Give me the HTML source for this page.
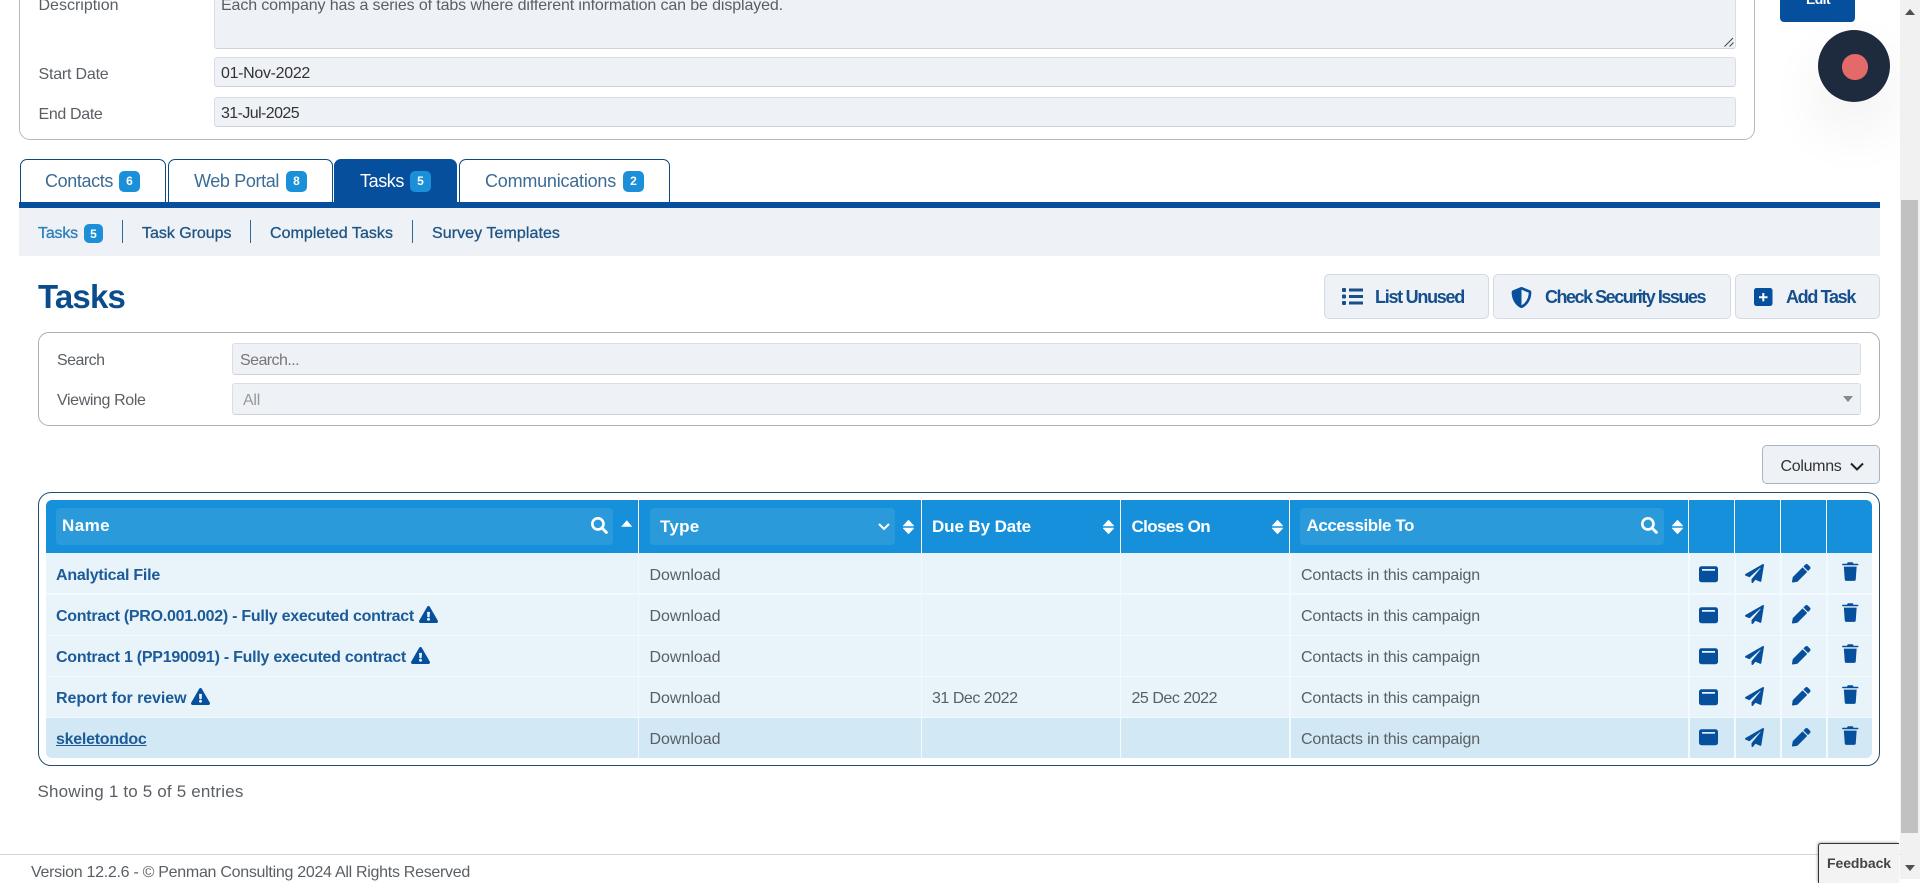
<!DOCTYPE html>
<html lang="en"><head><meta charset="utf-8"><title>Tasks</title>
<style>
html,body{margin:0;padding:0;width:1920px;height:879px;overflow:hidden;background:#fff;font-family:"Liberation Sans",Arial,sans-serif}
.b{position:absolute;box-sizing:border-box}
.t{position:absolute;white-space:nowrap;line-height:20px;height:20px;font-size:16px;color:#5a5f64;margin-top:1.500px}
.in{position:absolute;box-sizing:border-box;background:#eef1f6;border:1px solid #dadde3;border-bottom-color:#cfd3d9;border-radius:3px}
.tab{position:absolute;box-sizing:border-box;top:159px;height:43px;background:#fff;border:1px solid #0a4a80;border-bottom:0;border-radius:7px 7px 0 0}
.bd{position:absolute;background:#1b90d8;color:#fff;border-radius:5px;font-weight:bold;font-size:12px;text-align:center}
.tabt{font-size:18px;color:#3b6c96;margin-top:0}
.sub{font-size:16px;color:#1f5585;-webkit-text-stroke:.3px #1f5585;margin-top:1px}
.btn{position:absolute;box-sizing:border-box;top:274px;height:45px;background:#eef1f6;border:1px solid #d3dae2;border-radius:5px}
.bt{font-size:18px;font-weight:bold;color:#154f8c;margin-top:1px}
.h{font-size:17px;font-weight:bold;color:#fff;margin-top:0}
.n{font-size:16px;font-weight:bold;color:#1c5b98;margin-top:1px}
.row{position:absolute;left:46px;width:1826px;height:39.500px;background:#e8f3fa}
.v{position:absolute;width:1.500px;background:#f3f9fd;top:553px;height:205px}
.hv{position:absolute;width:1px;background:#fff;top:500px;height:53px}
svg.i{position:absolute;fill:#064f9c;overflow:visible}
.fb{position:absolute;box-sizing:border-box;border-radius:4px;background:#2a9adb}
</style></head><body>
<svg width="0" height="0" style="position:absolute"><defs>
<symbol id="search" viewBox="0 0 512 512"><path d="M505 442.7L405.3 343c-4.5-4.5-10.6-7-17-7H372c27.6-35.3 44-79.7 44-128C416 93.1 322.9 0 208 0S0 93.1 0 208s93.1 208 208 208c48.3 0 92.7-16.4 128-44v16.3c0 6.4 2.5 12.5 7 17l99.7 99.7c9.4 9.4 24.6 9.4 33.9 0l28.3-28.3c9.4-9.4 9.4-24.6.1-34zM208 336c-70.7 0-128-57.2-128-128 0-70.7 57.2-128 128-128 70.7 0 128 57.2 128 128 0 70.7-57.2 128-128 128z"/></symbol>
<symbol id="plane" viewBox="0 0 512 512"><path d="M476 3.2L12.5 270.6c-18.1 10.4-15.8 35.6 2.2 43.2L121 358.4l287.3-253.2c5.5-4.9 13.3 2.6 8.6 8.3L176 407v80.5c0 23.6 28.5 32.9 42.5 15.8L282 426l124.6 52.2c14.2 6 30.4-2.9 33-18.2l72-432C515 7.8 493.3-6.8 476 3.2z"/></symbol>
<symbol id="pencil" viewBox="0 0 512 512"><path d="M497.9 142.1l-46.1 46.1c-4.7 4.7-12.3 4.7-17 0l-111-111c-4.7-4.7-4.7-12.3 0-17l46.1-46.1c18.7-18.7 49.1-18.7 67.9 0l60.1 60.1c18.8 18.7 18.8 49.1 0 67.9zM284.2 99.8L21.6 362.4.4 483.9c-2.9 16.4 11.4 30.6 27.8 27.8l121.5-21.3 262.6-262.6c4.7-4.7 4.7-12.3 0-17l-111-111c-4.8-4.7-12.4-4.7-17.1 0z"/></symbol>
<symbol id="trash" viewBox="0 0 16 19"><path d="M5.5 0.3h5l.8 1.4H15.4a.6.6 0 0 1 0 1.6H.6a.6.6 0 0 1 0-1.6H4.7zM1.6 4.6h12.8l-.9 12.8a1.6 1.6 0 0 1-1.6 1.5H4.1a1.6 1.6 0 0 1-1.6-1.5z"/></symbol>
<symbol id="book" viewBox="0 0 19 16"><path fill-rule="evenodd" d="M2.5 0h14A2.5 2.5 0 0 1 19 2.5v11a2.5 2.5 0 0 1-2.500 2.500h-14A2.500 2.500 0 0 1 0 13.500v-11A2.500 2.500 0 0 1 2.500 0zM3 2.800v1.700h13V2.800z"/></symbol>
<symbol id="warn" viewBox="0 0 576 512"><path d="M569.517 440.013C587.975 472.007 564.806 512 527.94 512H48.054c-36.937 0-59.999-40.055-41.577-71.987L246.423 23.985c18.467-32.009 64.72-31.951 83.154 0l239.94 416.028zM288 354c-25.405 0-46 20.595-46 46s20.595 46 46 46 46-20.595 46-46-20.595-46-46-46zm-43.673-165.346l7.418 136c.347 6.364 5.609 11.346 11.982 11.346h48.546c6.373 0 11.635-4.982 11.982-11.346l7.418-136c.375-6.874-5.098-12.654-11.982-12.654h-63.383c-6.884 0-12.356 5.78-11.981 12.654z"/></symbol>
<symbol id="sort" viewBox="0 0 11 14"><path d="M5.500 0.500L10.500 5.800H.5zM5.500 13.500L.5 8.200H10.500z" stroke-linejoin="round" stroke-width="1"/></symbol>
<symbol id="shield" viewBox="0 0 512 512"><path d="M466.5 83.7l-192-80a48.15 48.15 0 0 0-36.9 0l-192 80C27.700 91.100 16 108.600 16 128c0 198.500 114.500 335.700 221.500 380.300 11.800 4.900 25.100 4.900 36.900 0C360.100 472.600 496 349.300 496 128c0-19.400-11.700-36.900-29.500-44.300zM256.100 446.300l-.1-381 175.900 73.300c-3.300 151.400-82.100 261.100-175.800 307.700z"/></symbol>
</defs></svg>

<!-- Top details panel -->
<div class="b" style="left:19px;top:-40px;width:1736px;height:180px;border:1px solid #b4b9be;border-radius:11px"></div>
<div class="t" style="left:38.500px;top:-6px" data-w="80">Description</div>
<div class="in" style="left:214px;top:-20px;width:1522px;height:69px"></div>
<div class="t" style="left:221px;top:-6px" data-w="562">Each company has a series of tabs where different information can be displayed.</div>
<svg class="b" style="left:1724px;top:37px" width="10" height="10" fill="none" stroke="#444" stroke-width="1"><path d="M0.500 9.500L9 1M5.500 9.500L9.500 5.500"/></svg>
<div class="t" style="left:38.500px;top:63px" data-w="70">Start Date</div>
<div class="in" style="left:214px;top:57px;width:1522px;height:30px"></div>
<div class="t" style="left:221px;top:62px;color:#333" data-w="89">01-Nov-2022</div>
<div class="t" style="left:38.500px;top:103px" data-w="64">End Date</div>
<div class="in" style="left:214px;top:97px;width:1522px;height:30px"></div>
<div class="t" style="left:221px;top:102px;color:#333" data-w="78">31-Jul-2025</div>

<div class="b" style="left:1780px;top:-20px;width:75px;height:42px;background:#064f9c;border-radius:4px"></div>
<div class="t" style="left:1806px;top:-13px;color:#fff;font-weight:bold;font-size:14px" data-w="24">Edit</div>

<!-- Tabs -->
<div class="tab" style="left:19.500px;width:146px"></div>
<div class="t tabt" style="left:45px;top:171px" data-w="68">Contacts</div>
<div class="bd" style="left:119px;top:171px;width:21px;height:21px;line-height:21px">6</div>
<div class="tab" style="left:168px;width:165px"></div>
<div class="t tabt" style="left:194px;top:171px" data-w="85">Web Portal</div>
<div class="bd" style="left:286px;top:171px;width:21px;height:21px;line-height:21px">8</div>
<div class="tab" style="left:334px;width:123px;background:#064f9c;border-color:#064f9c"></div>
<div class="t tabt" style="left:360px;top:171px;color:#fff" data-w="44">Tasks</div>
<div class="bd" style="left:410px;top:171px;width:21px;height:21px;line-height:21px">5</div>
<div class="tab" style="left:459px;width:211px"></div>
<div class="t tabt" style="left:485px;top:171px" data-w="131">Communications</div>
<div class="bd" style="left:623px;top:171px;width:21px;height:21px;line-height:21px">2</div>
<div class="b" style="left:19px;top:202px;width:1861px;height:6px;background:#064f9c"></div>

<!-- Sub nav -->
<div class="b" style="left:19px;top:208px;width:1861px;height:48px;background:#eef1f6"></div>
<div class="t sub" style="left:38px;top:223px;color:#2f7fb8;-webkit-text-stroke-color:#2f7fb8" data-w="40">Tasks</div>
<div class="bd" style="left:84px;top:224px;width:19px;height:19px;line-height:20px">5</div>
<div class="b" style="left:122px;top:220px;width:1px;height:23px;background:#2a6a9c"></div>
<div class="t sub" style="left:142px;top:223px" data-w="89.500">Task Groups</div>
<div class="b" style="left:250px;top:220px;width:1px;height:23px;background:#2a6a9c"></div>
<div class="t sub" style="left:270px;top:223px" data-w="123">Completed Tasks</div>
<div class="b" style="left:412px;top:220px;width:1px;height:23px;background:#2a6a9c"></div>
<div class="t sub" style="left:432px;top:223px" data-w="128">Survey Templates</div>

<!-- Title and buttons -->
<div class="t" style="left:38px;top:287px;margin-top:0;font-size:33px;font-weight:bold;color:#0b4d8c" data-w="87">Tasks</div>
<div class="btn" style="left:1324px;width:165px"></div>
<svg class="i" style="left:1342px;top:288px;fill:#154f8c" width="21" height="17"><rect x="0" y="0" width="4" height="4" rx="1"/><rect x="0" y="6.500" width="4" height="4" rx="1"/><rect x="0" y="13" width="4" height="4" rx="1"/><rect x="7" y="0.500" width="14" height="3"/><rect x="7" y="7" width="14" height="3"/><rect x="7" y="13.500" width="14" height="3"/></svg>
<div class="t bt" style="left:1375px;top:286px" data-w="89">List Unused</div>
<div class="btn" style="left:1493px;width:238px"></div>
<svg class="i" style="left:1511px;top:287px" width="21" height="21"><use href="#shield"/></svg>
<div class="t bt" style="left:1545px;top:286px" data-w="160">Check Security Issues</div>
<div class="btn" style="left:1735px;width:145px"></div>
<svg class="i" style="left:1753.500px;top:288px" width="18.500" height="18"><rect width="18.500" height="18" rx="2.500"/><path fill="#fff" d="M8.300 5h2v3.200h3.200v2h-3.200v3.200h-2v-3.200H5v-2h3.300z"/></svg>
<div class="t bt" style="left:1786px;top:286px" data-w="69">Add Task</div>

<!-- Filters -->
<div class="b" style="left:38px;top:332px;width:1842px;height:94px;border:1px solid #aab0b6;border-radius:11px"></div>
<div class="t" style="left:57px;top:349px" data-w="47.500">Search</div>
<div class="in" style="left:232px;top:343px;width:1629px;height:32px"></div>
<div class="t" style="left:240px;top:349px;color:#777" data-w="59">Search...</div>
<div class="t" style="left:57px;top:389px" data-w="88.500">Viewing Role</div>
<div class="in" style="left:232px;top:383px;width:1629px;height:32px"></div>
<div class="t" style="left:243px;top:389px;color:#999" data-w="17">All</div>
<svg class="b" style="left:1843px;top:396px" width="10" height="6"><path d="M0 0H10L5 6z" fill="#888"/></svg>

<!-- Columns -->
<div class="b" style="left:1762px;top:445px;width:118px;height:39px;background:#eef1f6;border:1px solid #aab4c0;border-radius:5px"></div>
<div class="t" style="left:1780.500px;top:455px;color:#333" data-w="61">Columns</div>
<svg class="b" style="left:1850px;top:462px" width="14" height="9" fill="none" stroke="#222" stroke-width="2"><path d="M1 1.500L7 7.500L13 1.500"/></svg>

<!-- Table -->
<div class="b" style="left:38px;top:492px;width:1842px;height:274px;border:1.500px solid #1f4f70;border-radius:13px"></div>
<div class="b" style="left:46px;top:500px;width:1826px;height:53px;background:#1690da;border-radius:6px 6px 0 0"></div>
<div class="hv" style="left:637.500px"></div><div class="hv" style="left:920.500px"></div><div class="hv" style="left:1119.500px"></div><div class="hv" style="left:1289px"></div><div class="hv" style="left:1688px"></div><div class="hv" style="left:1734px"></div><div class="hv" style="left:1780px"></div><div class="hv" style="left:1826px"></div>

<div class="fb" style="left:56px;top:508px;width:557px;height:37px"></div>
<div class="t h" style="left:62px;top:516px" data-w="48">Name</div>
<svg class="i" style="left:591px;top:517px;fill:#fff" width="17" height="17"><use href="#search"/></svg>
<svg class="i" style="left:620.500px;top:520px;fill:#fff" width="11.500" height="7"><path d="M5.750 0.300L11.300 6.800H.2z"/></svg>

<div class="fb" style="left:649.500px;top:508px;width:245.500px;height:37px"></div>
<div class="t h" style="left:660px;top:517px" data-w="39.500">Type</div>
<svg class="b" style="left:878px;top:523px" width="12" height="8" fill="none" stroke="#fff" stroke-width="2"><path d="M1 1L6 6L11 1"/></svg>
<svg class="i" style="left:903px;top:520px;fill:#fff;stroke:#fff" width="11" height="14"><use href="#sort"/></svg>

<div class="t h" style="left:932px;top:517px" data-w="99">Due By Date</div>
<svg class="i" style="left:1102.500px;top:520px;fill:#fff;stroke:#fff" width="11" height="14"><use href="#sort"/></svg>
<div class="t h" style="left:1131.500px;top:517px" data-w="78.500">Closes On</div>
<svg class="i" style="left:1271.500px;top:520px;fill:#fff;stroke:#fff" width="11" height="14"><use href="#sort"/></svg>

<div class="fb" style="left:1300px;top:508px;width:363.500px;height:37px"></div>
<div class="t h" style="left:1306.500px;top:516px" data-w="107.500">Accessible To</div>
<svg class="i" style="left:1641px;top:517px;fill:#fff" width="17" height="17"><use href="#search"/></svg>
<svg class="i" style="left:1672px;top:520px;fill:#fff;stroke:#fff" width="11" height="14"><use href="#sort"/></svg>

<!-- Rows -->
<div class="b" style="left:46px;top:553px;width:1826px;height:205px;background:#f3f9fd;border-radius:0 0 6px 6px"></div>
<div class="row" style="top:553px"></div>
<div class="row" style="top:595px"></div>
<div class="row" style="top:636px"></div>
<div class="row" style="top:677px"></div>
<div class="row" style="top:718px;height:40px;background:#d3e8f5;border-radius:0 0 6px 6px"></div>
<div class="v" style="left:637.500px"></div><div class="v" style="left:920.500px"></div><div class="v" style="left:1119.500px"></div><div class="v" style="left:1289px"></div><div class="v" style="left:1688px"></div><div class="v" style="left:1734px"></div><div class="v" style="left:1780px"></div><div class="v" style="left:1826px"></div>

<div class="t n" style="left:56px;top:565px" data-w="104">Analytical File</div>
<div class="t n" style="left:56px;top:605.500px" data-w="358">Contract (PRO.001.002) - Fully executed contract</div>
<svg class="i" style="left:419px;top:606px" width="19" height="17"><use href="#warn"/></svg>
<div class="t n" style="left:56px;top:646.500px" data-w="350">Contract 1 (PP190091) - Fully executed contract</div>
<svg class="i" style="left:410.500px;top:647px" width="19" height="17"><use href="#warn"/></svg>
<div class="t n" style="left:56px;top:687.500px" data-w="130.500">Report for review</div>
<svg class="i" style="left:190.500px;top:688px" width="19" height="17"><use href="#warn"/></svg>
<div class="t n" style="left:56px;top:728.500px;text-decoration:underline" data-w="90.500">skeletondoc</div>

<div class="t" style="left:649.500px;top:564px" data-w="71">Download</div>
<div class="t" style="left:649.500px;top:605.500px" data-w="71">Download</div>
<div class="t" style="left:649.500px;top:646.500px" data-w="71">Download</div>
<div class="t" style="left:649.500px;top:687.500px" data-w="71">Download</div>
<div class="t" style="left:649.500px;top:728.500px" data-w="71">Download</div>

<div class="t" style="left:932px;top:687.500px" data-w="85.500">31 Dec 2022</div>
<div class="t" style="left:1131.500px;top:687.500px" data-w="85.500">25 Dec 2022</div>

<div class="t" style="left:1301px;top:564px" data-w="179">Contacts in this campaign</div>
<div class="t" style="left:1301px;top:605.500px" data-w="179">Contacts in this campaign</div>
<div class="t" style="left:1301px;top:646.500px" data-w="179">Contacts in this campaign</div>
<div class="t" style="left:1301px;top:687.500px" data-w="179">Contacts in this campaign</div>
<div class="t" style="left:1301px;top:728.500px" data-w="179">Contacts in this campaign</div>

<svg class="i" style="left:1699px;top:566px" width="19" height="16.500"><use href="#book"/></svg>
<svg class="i" style="left:1745px;top:564px" width="19" height="19"><use href="#plane"/></svg>
<svg class="i" style="left:1791.500px;top:564px" width="18.500" height="18.500"><use href="#pencil"/></svg>
<svg class="i" style="left:1842px;top:561.500px" width="16.500" height="19"><use href="#trash"/></svg>

<svg class="i" style="left:1699px;top:607px" width="19" height="16.500"><use href="#book"/></svg>
<svg class="i" style="left:1745px;top:605px" width="19" height="19"><use href="#plane"/></svg>
<svg class="i" style="left:1791.500px;top:605px" width="18.500" height="18.500"><use href="#pencil"/></svg>
<svg class="i" style="left:1842px;top:602.500px" width="16.500" height="19"><use href="#trash"/></svg>

<svg class="i" style="left:1699px;top:648px" width="19" height="16.500"><use href="#book"/></svg>
<svg class="i" style="left:1745px;top:646px" width="19" height="19"><use href="#plane"/></svg>
<svg class="i" style="left:1791.500px;top:646px" width="18.500" height="18.500"><use href="#pencil"/></svg>
<svg class="i" style="left:1842px;top:643.500px" width="16.500" height="19"><use href="#trash"/></svg>

<svg class="i" style="left:1699px;top:689px" width="19" height="16.500"><use href="#book"/></svg>
<svg class="i" style="left:1745px;top:687px" width="19" height="19"><use href="#plane"/></svg>
<svg class="i" style="left:1791.500px;top:687px" width="18.500" height="18.500"><use href="#pencil"/></svg>
<svg class="i" style="left:1842px;top:684.500px" width="16.500" height="19"><use href="#trash"/></svg>

<svg class="i" style="left:1699px;top:729px" width="19" height="16.500"><use href="#book"/></svg>
<svg class="i" style="left:1745px;top:728px" width="19" height="19"><use href="#plane"/></svg>
<svg class="i" style="left:1791.500px;top:728px" width="18.500" height="18.500"><use href="#pencil"/></svg>
<svg class="i" style="left:1842px;top:725.500px" width="16.500" height="19"><use href="#trash"/></svg>

<div class="t" style="left:37.500px;top:780px;font-size:17px" data-w="206">Showing 1 to 5 of 5 entries</div>

<!-- Footer -->
<div class="b" style="left:0;top:854px;width:1900px;height:1px;background:#d6d6d6"></div>
<div class="t" style="left:31px;top:861px;font-size:16px" data-w="439">Version 12.2.6 - © Penman Consulting 2024 All Rights Reserved</div>

<!-- Recorder widget -->
<div class="b" style="left:1818px;top:30px;width:72px;height:72px;border-radius:50%;background:#1e2a3e;box-shadow:0 28px 60px rgba(0,0,0,.07)"></div>
<div class="b" style="left:1842px;top:54px;width:25.500px;height:25.500px;border-radius:50%;background:#e46a6a"></div>

<!-- Scrollbar -->
<div class="b" style="left:1899.500px;top:0;width:20.500px;height:879px;background:#f1f1f1"></div>
<div class="b" style="left:1901px;top:200px;width:17px;height:633px;background:#c1c1c1"></div>
<svg class="b" style="left:1905px;top:9px" width="10" height="6"><path d="M5 0L10 6H0z" fill="#505050"/></svg>
<svg class="b" style="left:1905px;top:865px" width="10" height="6"><path d="M0 0H10L5 6z" fill="#505050"/></svg>

<!-- Feedback -->
<div class="b" style="left:1818px;top:843px;width:81px;height:40px;background:#f3f3f3;border:1px solid #333;border-right:0;border-bottom:0;border-radius:3px 0 0 0;box-shadow:-1px -1px 2px rgba(0,0,0,.25)"></div>
<div class="t" style="left:1827px;top:853px;margin-top:0;font-size:14px;font-weight:bold;color:#444" data-w="64">Feedback</div>

<script>
document.querySelectorAll('[data-w]').forEach(function(e){
  var w=e.getBoundingClientRect().width,n=e.textContent.length;
  e.style.letterSpacing=((+e.dataset.w-w)/n)+'px';
});
</script>
</body></html>
